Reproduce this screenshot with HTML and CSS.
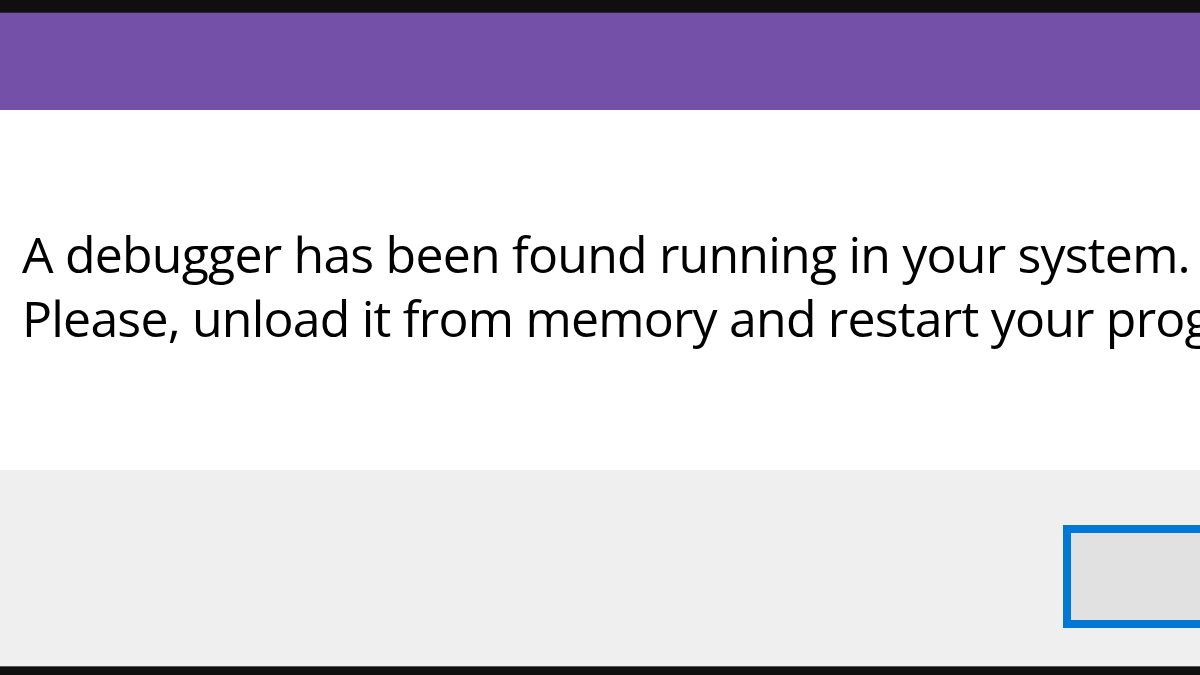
FILE: index.html
```html
<!DOCTYPE html>
<html lang="en">
<head>
    <meta charset="UTF-8">
    <meta name="viewport" content="width=device-width, initial-scale=1.0">
    <title>Debugger detected</title>
    <link rel="stylesheet" href="styles.css">
</head>
<body>

<div class="screen">
    <div class="frame-top"></div>
    <div class="titlebar"></div>

    <div class="content">
        <p class="message">
            A debugger has been found running in your system.<br>
            Please, unload it from memory and restart your program.
        </p>
    </div>

    <div class="footer">
        <!-- the button label sits off screen, only the left part is visible -->
        <button class="ok-btn" aria-label="OK"></button>
    </div>

    <div class="frame-bottom"></div>
</div>

</body>
</html>
```

FILE: styles.css
```css
body {
    margin: 0;
    font-family: "Open Sans", "Noto Sans", sans-serif;
    background-color: #0f0f0f;
    overflow: hidden;
}

.screen {
    width: 1200px;
    height: 675px;
    display: flex;
    flex-direction: column;
    overflow: hidden;
}

.frame-top {
    height: 12px;
    background-color: #0f0f0f;
    border-bottom: 1px solid #2b2633;
}

.titlebar {
    height: 97px;
    background-color: #7450a8;
}

.content {
    height: 248px;
    padding: 112px 0 0 22px;
    background-color: #ffffff;
}

.message {
    margin: 0;
    font-size: 50px;
    line-height: 64px;
    letter-spacing: -0.8px;
    color: #000000;
    white-space: nowrap;
}

.footer {
    height: 141px;
    padding: 55px 0 0 1063px;
    background-color: #efefef;
    overflow: hidden;
}

.ok-btn {
    width: 360px;
    height: 103px;
    box-sizing: border-box;
    border: 8px solid #0078d7;
    background-color: #e1e1e1;
}

.frame-bottom {
    flex: 1;
    background-color: #0f0f0f;
    border-top: 1px solid #5a5a5a;
}
```
